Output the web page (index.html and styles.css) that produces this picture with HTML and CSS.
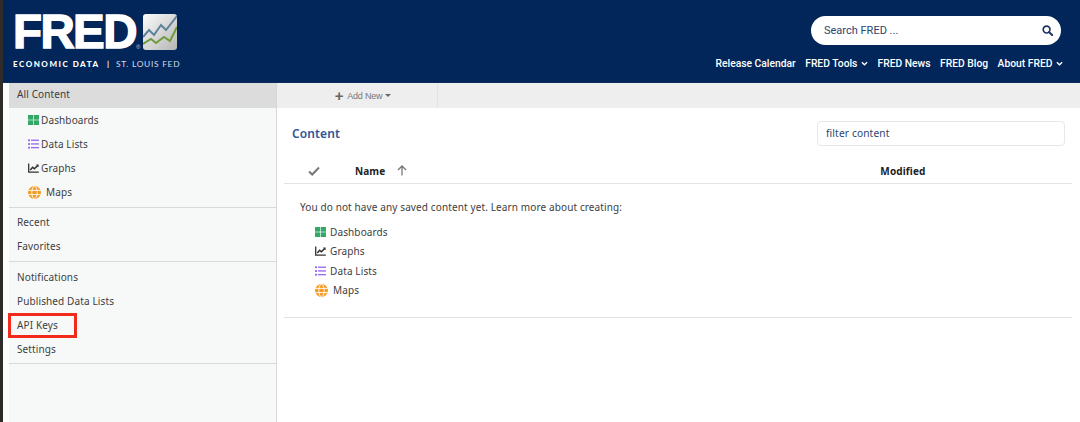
FILE: index.html
```html
<!DOCTYPE html>
<html lang="en">
<head>
<meta charset="utf-8">
<title>FRED Account</title>
<link rel="stylesheet" href="styles.css">
</head>
<body>
<svg class="defs" width="0" height="0" aria-hidden="true">
  <symbol id="i-dash" viewBox="0 0 11 10">
    <rect x="0" y="0" width="5.2" height="4.7" fill="#35a868"/><rect x="5.8" y="0" width="5.2" height="4.7" fill="#35a868"/>
    <rect x="0" y="5.3" width="5.2" height="4.7" fill="#35a868"/><rect x="5.8" y="5.3" width="5.2" height="4.7" fill="#35a868"/>
  </symbol>
  <symbol id="i-list" viewBox="0 0 11 10">
    <g fill="#9666ee"><rect x="0" y="0.4" width="2" height="1.8"/><rect x="0" y="4.1" width="2" height="1.8"/><rect x="0" y="7.8" width="2" height="1.8"/>
    <rect x="3" y="0.6" width="8" height="1.3"/><rect x="3" y="4.3" width="8" height="1.3"/><rect x="3" y="8" width="8" height="1.3"/></g>
  </symbol>
  <symbol id="i-graph" viewBox="0 0 11 10">
    <path d="M.7 .5V9.2H10.8" fill="none" stroke="#333" stroke-width="1.3"/>
    <path d="M2.3 7 4.6 4.3 6.4 5.8 9.8 2.4" fill="none" stroke="#333" stroke-width="1.5"/>
    <path d="M8 1.6H10.6V4.2Z" fill="#333"/>
  </symbol>
  <symbol id="i-globe" viewBox="0 0 13 13">
    <circle cx="6.5" cy="6.5" r="6.5" fill="#f59a23"/>
    <g fill="none" stroke="#fff" stroke-width=".9"><ellipse cx="6.5" cy="6.5" rx="2.7" ry="6.2"/><path d="M.3 4.4H12.7M.3 8.6H12.7"/></g>
  </symbol>
</svg>
<div class="desktop-strip"></div>
<div class="app">
  <header class="topbar">
    <div class="brand">
      <div class="brand-top">
        <span class="wordmark">FRED</span><span class="reg">®</span>
        <svg class="chart-tile" viewBox="0 0 34 36" aria-hidden="true">
          <defs><linearGradient id="tile" x1="0" y1="0" x2="1" y2="1"><stop offset="0" stop-color="#fafafa"/><stop offset="1" stop-color="#b5b7b5"/></linearGradient></defs>
          <rect width="34" height="36" rx="3" fill="url(#tile)"/>
          <path d="M0 23 6 16 11 21 18 11 23 16 34 2" fill="none" stroke="#5d8299" stroke-width="2"/>
          <path d="M0 30 8 25 13 29 21 23 27 27 34 13" fill="none" stroke="#6f9a3d" stroke-width="2"/>
        </svg>
      </div>
      <div class="brand-sub"><b>ECONOMIC DATA</b><i>|</i><span>ST. LOUIS FED</span></div>
    </div>
    <div class="top-right">
      <div class="search">
        <span>Search FRED ...</span>
        <svg class="search-icon" viewBox="0 0 12 12" aria-hidden="true"><circle cx="5" cy="5" r="3.7" fill="none" stroke="#1b3563" stroke-width="1.8"/><path d="M7.8 7.8 11 11" stroke="#1b3563" stroke-width="2.2" stroke-linecap="round"/></svg>
      </div>
      <nav class="mainnav">
        <a>Release Calendar</a>
        <a>FRED Tools <svg class="chev" viewBox="0 0 8 5" aria-hidden="true"><path d="M1 1 4 4 7 1" fill="none" stroke="#fff" stroke-width="1.5"/></svg></a>
        <a>FRED News</a>
        <a>FRED Blog</a>
        <a>About FRED <svg class="chev" viewBox="0 0 8 5" aria-hidden="true"><path d="M1 1 4 4 7 1" fill="none" stroke="#fff" stroke-width="1.5"/></svg></a>
      </nav>
    </div>
  </header>
  <div class="body">
    <aside class="sidebar">
      <div class="side-active">All Content</div>
      <ul class="side-group sub">
        <li><svg class="ic"><use href="#i-dash"/></svg>Dashboards</li>
        <li><svg class="ic"><use href="#i-list"/></svg>Data Lists</li>
        <li><svg class="ic"><use href="#i-graph"/></svg>Graphs</li>
        <li><svg class="ic-globe"><use href="#i-globe"/></svg>Maps</li>
      </ul>
      <ul class="side-group second">
        <li>Recent</li>
        <li>Favorites</li>
      </ul>
      <ul class="side-group third">
        <li>Notifications</li>
        <li>Published Data Lists</li>
        <li class="marked">API Keys<span class="red-box"></span></li>
        <li>Settings</li>
      </ul>
    </aside>
    <main class="main">
      <div class="toolbar">
        <div class="add-new"><span class="plus">+</span>Add New<span class="caret"></span></div>
      </div>
      <div class="panel">
        <div class="panel-head">
          <h2>Content</h2>
          <div class="filter">filter content</div>
        </div>
        <div class="thead">
          <svg class="check" viewBox="0 0 12 10" aria-hidden="true"><path d="M1 5.5 4.2 8.5 11 1.5" fill="none" stroke="#777" stroke-width="2"/></svg>
          <b class="th-name">Name</b>
          <svg class="arrow" viewBox="0 0 10 11" aria-hidden="true"><path d="M5 10.5V1.2M1 5 5 1 9 5" fill="none" stroke="#777" stroke-width="1.3"/></svg>
          <b class="th-mod">Modified</b>
        </div>
        <div class="empty">
          <p>You do not have any saved content yet. Learn more about creating:</p>
          <ul>
            <li><svg class="ic"><use href="#i-dash"/></svg>Dashboards</li>
            <li><svg class="ic"><use href="#i-graph"/></svg>Graphs</li>
            <li><svg class="ic"><use href="#i-list"/></svg>Data Lists</li>
            <li><svg class="ic-globe"><use href="#i-globe"/></svg>Maps</li>
          </ul>
        </div>
      </div>
    </main>
  </div>
</div>
</body>
</html>
```

FILE: styles.css
```css
* { box-sizing: border-box; }
html, body { margin: 0; height: 100%; overflow: hidden; }
body {
  display: flex;
  width: 1080px;
  height: 422px;
  background: #fff;
  font-family: "Noto Sans", sans-serif;
  font-size: 10px;
  color: #3d3d3d;
}
.defs { position: absolute; }
ul { list-style: none; margin: 0; padding: 0; }
.desktop-strip { width: 3px; flex: none; background: #2f2c2a; }
.app { flex: 1; display: flex; flex-direction: column; min-width: 0; letter-spacing: .12px; }

/* header */
.topbar {
  height: 83px;
  flex: none;
  background: #03265a;
  border-bottom: 1px solid #0b2c5c;
  display: flex;
  justify-content: space-between;
  color: #fff;
  letter-spacing: 0;
}
.brand { padding: 14px 0 0 10px; }
.brand-top { display: flex; align-items: flex-start; height: 36px; }
.wordmark {
  font-family: "Liberation Sans", sans-serif;
  font-weight: 700;
  font-size: 47.5px;
  line-height: 36px;
  letter-spacing: -1.6px;
  -webkit-text-stroke: 1.4px #fff;
  width: 123px;
}
.reg { font-size: 6px; line-height: 8px; margin: 29px 0 0 0; width: 7px; color: #c8d0dc; font-family: "Liberation Sans", sans-serif; }
.chart-tile { width: 34px; height: 36px; display: block; }
.brand-sub {
  margin-top: 9px;
  display: flex;
  align-items: center;
  height: 10px;
  font-family: "Lato", sans-serif;
  font-size: 8px;
  white-space: nowrap;
}
.brand-sub b { font-weight: 900; letter-spacing: 1.52px; width: 90px; }
.brand-sub i { font-style: normal; font-weight: 700; width: 9px; margin-left: 4px; }
.brand-sub span { letter-spacing: .72px; color: #d5dbe5; font-size: 8.4px; }

.top-right { display: flex; flex-direction: column; align-items: flex-end; padding: 16px 17px 0 0; }
.search {
  width: 250px;
  height: 29px;
  margin-right: 2px;
  border-radius: 15px;
  background: #fff;
  display: flex;
  align-items: center;
  justify-content: space-between;
  padding: 0 8px 0 13px;
  font-family: "Roboto", sans-serif;
  font-size: 11px;
  color: #2b4470;
}
.search-icon { width: 11px; height: 11px; }
.mainnav {
  display: flex;
  gap: 9.5px;
  margin-top: 12px;
  font-family: "Roboto", sans-serif;
  font-size: 10.3px;
  font-weight: 500;
  line-height: 14px;
  white-space: nowrap;
}
.chev { width: 7px; height: 5px; vertical-align: 1px; margin-left: 1px; }

/* body */
.body { flex: 1; display: flex; min-height: 0; }
.sidebar {
  width: 268px;
  margin-left: 6px;
  flex: none;
  background: #f7f9f9;
  border-right: 1px solid #d8d8d8;
}
.side-active {
  height: 25px;
  line-height: 23px;
  padding-left: 8px;
  background: #dcdcdc;
}
.side-group { border-bottom: 1px solid #d9d9d9; }
.side-group.sub { padding: 1px 0 2px; }
.side-group.second { padding: 3px 0 2px; }
.side-group.third { padding: 4px 0 1px; }
.side-group li {
  height: 24px;
  padding: 0 0 2px 8px;
  display: flex;
  align-items: center;
  position: relative;
  white-space: nowrap;
}
.side-group.sub li { padding-left: 19px; }
.ic { width: 11px; height: 10px; margin-right: 2px; flex: none; }
.ic-globe { width: 13px; height: 13px; margin-right: 5px; flex: none; }
.red-box {
  position: absolute;
  left: -1px;
  top: -1px;
  width: 69px;
  height: 25px;
  border: 3px solid #f22a1c;
}

.main { flex: 1; min-width: 0; display: flex; flex-direction: column; }
.toolbar { height: 25px; flex: none; background: #eeeeee; display: flex; }
.add-new {
  width: 161px;
  padding-left: 12px;
  border-right: 1px solid #e4e4e4;
  display: flex;
  align-items: center;
  justify-content: center;
  font-family: "Liberation Sans", sans-serif;
  font-size: 9px;
  letter-spacing: -.2px;
  color: #777;
}
.plus { font-size: 15px; font-weight: 700; line-height: 14px; margin-right: 4px; color: #666; }
.caret {
  width: 0; height: 0;
  margin-left: 3px;
  border-left: 3px solid transparent;
  border-right: 3px solid transparent;
  border-top: 3px solid #666;
}
.panel { padding: 0 8px 0 7px; }
.panel-head {
  height: 51px;
  display: flex;
  justify-content: space-between;
  padding: 13px 7px 0 8px;
}
.panel-head h2 { margin: 6px 0 0; font-size: 12px; line-height: 14px; font-weight: 600; color: #2e5597; }
.filter {
  width: 248px;
  height: 25px;
  border: 1px solid #e6e8ea;
  border-radius: 4px;
  padding-left: 8px;
  line-height: 22px;
  color: #2b4470;
  font-size: 10.2px;
}
.thead {
  height: 25px;
  padding-bottom: 1px;
  border-bottom: 1px solid #e3e3e3;
  display: flex;
  align-items: center;
  color: #222;
}
.check { width: 12px; height: 10px; margin-left: 24px; }
.th-name { margin-left: 35px; }
.arrow { width: 10px; height: 11px; margin-left: 12px; }
.th-mod { margin-left: 473px; }
.empty { height: 134px; border-bottom: 1px solid #e3e3e3; padding: 16px 0 0 16px; }
.empty p { margin: 0; line-height: 14px; }
.empty ul { margin-top: 8px; padding-left: 15px; }
.empty li { height: 19.5px; display: flex; align-items: center; white-space: nowrap; }
.empty .ic { margin-right: 4px; }
.empty .ic-globe { margin-right: 5px; }
```
